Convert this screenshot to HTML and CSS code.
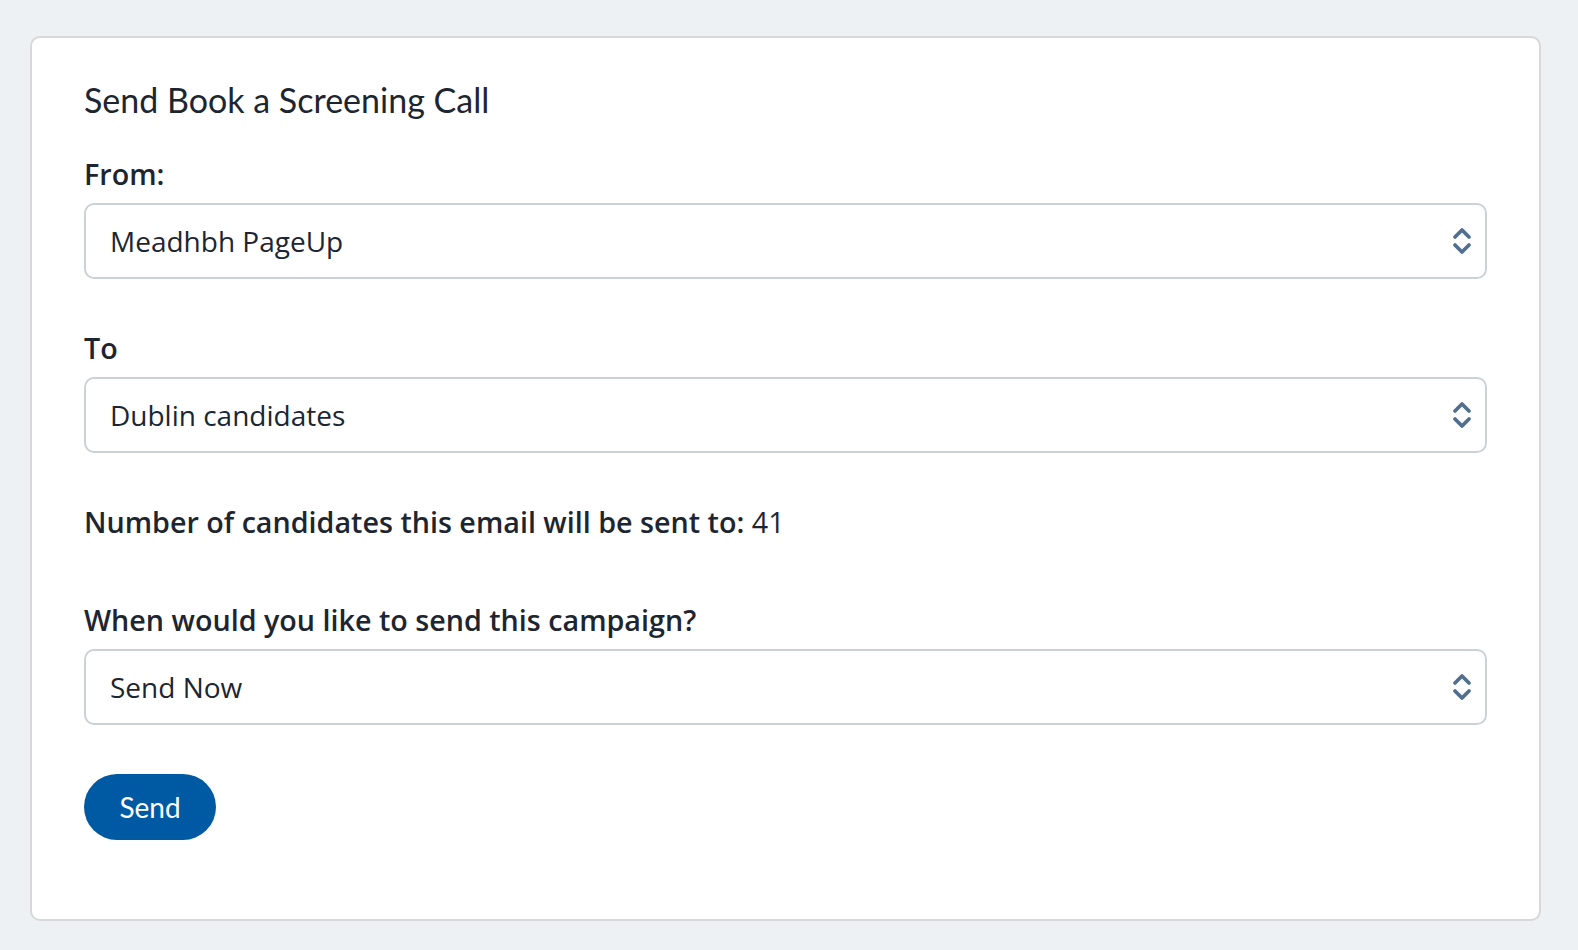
FILE: index.html
```html
<!DOCTYPE html>
<html lang="en">
<head>
<meta charset="utf-8">
<title>Send Book a Screening Call</title>
<link rel="stylesheet" href="styles.css">
</head>
<body>
<main class="card">
  <h1 class="title">Send Book a Screening Call</h1>

  <div class="field">
    <label class="label" for="from">From:</label>
    <div class="select">
      <span class="select-value">Meadhbh PageUp</span>
      <svg class="chevrons" width="20" height="30" viewBox="0 0 20 30" aria-hidden="true">
        <path d="M3 11 L10 4 L17 11 M3 19 L10 26 L17 19" fill="none" stroke="#52708e" stroke-width="3.8" stroke-linecap="round" stroke-linejoin="round"/>
      </svg>
    </div>
  </div>

  <div class="field">
    <label class="label" for="to">To</label>
    <div class="select">
      <span class="select-value">Dublin candidates</span>
      <svg class="chevrons" width="20" height="30" viewBox="0 0 20 30" aria-hidden="true">
        <path d="M3 11 L10 4 L17 11 M3 19 L10 26 L17 19" fill="none" stroke="#52708e" stroke-width="3.8" stroke-linecap="round" stroke-linejoin="round"/>
      </svg>
    </div>
  </div>

  <p class="count"><span class="count-label">Number of candidates this email will be sent to:</span> 41</p>

  <div class="field field-when">
    <label class="label" for="when">When would you like to send this campaign?</label>
    <div class="select">
      <span class="select-value">Send Now</span>
      <svg class="chevrons" width="20" height="30" viewBox="0 0 20 30" aria-hidden="true">
        <path d="M3 11 L10 4 L17 11 M3 19 L10 26 L17 19" fill="none" stroke="#52708e" stroke-width="3.8" stroke-linecap="round" stroke-linejoin="round"/>
      </svg>
    </div>
  </div>

  <div class="actions">
    <button class="btn" type="button">Send</button>
  </div>
</main>
</body>
</html>
```

FILE: styles.css
```css
html, body {
  margin: 0;
  padding: 0;
}

body {
  background: #edf1f4;
  padding: 36px 37px 29px 30px;
  font-family: "Open Sans", "Liberation Sans", sans-serif;
  color: #1d2630;
}

.card {
  display: flex;
  flex-direction: column;
  background: #ffffff;
  border: 2px solid #d6d8da;
  border-radius: 10px;
  padding: 42px 52px 77px 52px;
  height: 885px;
  box-sizing: border-box;
}

.title {
  margin: 0;
  font-family: "Lato", "Open Sans", sans-serif;
  font-weight: 400;
  font-size: 34px;
  line-height: 40px;
  color: #1d2630;
}

.field {
  display: flex;
  flex-direction: column;
  gap: 12px;
  margin-top: 37px;
}

.field + .field {
  margin-top: 52px;
}

.label {
  font-weight: 600;
  font-size: 28.7px;
  line-height: 34px;
  color: #1d2630;
}

.select {
  display: flex;
  align-items: center;
  justify-content: space-between;
  height: 76px;
  box-sizing: border-box;
  border: 2px solid #ccd1d6;
  border-radius: 10px;
  padding: 0 13px 0 24px;
  background: #ffffff;
}

.select-value {
  font-size: 28px;
  line-height: 34px;
  color: #1d2630;
}

.chevrons {
  display: block;
  flex: none;
}

.count {
  margin: 52px 0 0;
  font-size: 28.7px;
  line-height: 34px;
}

.count-label {
  font-weight: 600;
}

.field-when {
  margin-top: 64px;
}

.actions {
  margin-top: 49px;
  display: flex;
}

.btn {
  height: 66px;
  width: 132px;
  border: none;
  border-radius: 33px;
  background: #005aa3;
  color: #ffffff;
  font-family: "Lato", "Open Sans", sans-serif;
  font-size: 28px;
  padding: 0;
  cursor: pointer;
}
```
